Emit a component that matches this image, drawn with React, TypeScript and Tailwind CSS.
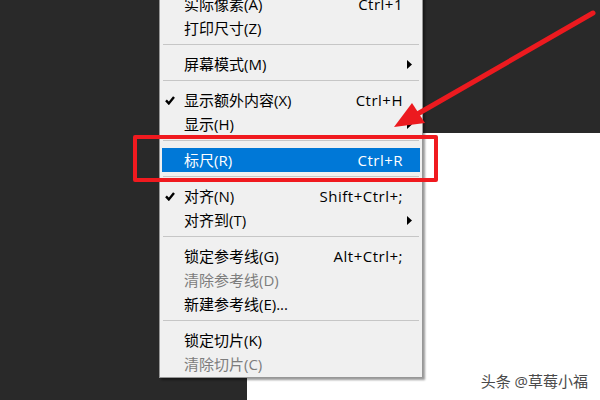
type Entry =
  | { sep: true }
  | {
      sep?: false;
      label: string;
      shortcut?: string;
      check?: boolean;
      sub?: boolean;
      disabled?: boolean;
      active?: boolean;
    };

const entries: Entry[] = [
  { label: "实际像素(A)", shortcut: "Ctrl+1" },
  { label: "打印尺寸(Z)" },
  { sep: true },
  { label: "屏幕模式(M)", sub: true },
  { sep: true },
  { label: "显示额外内容(X)", shortcut: "Ctrl+H", check: true },
  { label: "显示(H)", sub: true },
  { sep: true },
  { label: "标尺(R)", shortcut: "Ctrl+R", active: true },
  { sep: true },
  { label: "对齐(N)", shortcut: "Shift+Ctrl+;", check: true },
  { label: "对齐到(T)", sub: true },
  { sep: true },
  { label: "锁定参考线(G)", shortcut: "Alt+Ctrl+;" },
  { label: "清除参考线(D)", disabled: true },
  { label: "新建参考线(E)..." },
  { sep: true },
  { label: "锁定切片(K)" },
  { label: "清除切片(C)", disabled: true },
];

function Check() {
  return (
    <svg width="10" height="9" viewBox="0 0 10 9">
      <path d="M1 4.4 L3.8 7.4 L9 1" fill="none" stroke="#000" strokeWidth="2.4" />
    </svg>
  );
}

function SubArrow({ white }: { white?: boolean }) {
  return (
    <svg width="5" height="9" viewBox="0 0 5 9">
      <path d="M0 0 L5 4.5 L0 9 Z" fill={white ? "#fff" : "#000"} />
    </svg>
  );
}

export default function App() {
  return (
    <div
      className="relative h-[400px] w-[600px] overflow-hidden bg-[#292929]"
      style={{ fontFamily: '"Open Sans", "Noto Sans CJK SC", sans-serif' }}
    >
      {/* canvas */}
      <div className="absolute left-[247px] top-[133px] h-[267px] w-[353px] bg-white" />

      {/* menu */}
      <div className="absolute left-[159px] top-[-10px] w-[264px] border border-[#979797] bg-[#f0f0f0] py-px shadow-[2px_2px_2px_rgba(0,0,0,0.4)]">
        {entries.map((e, i) =>
          e.sep ? (
            <div key={i} className="h-[12px] px-[3px] pt-[4px]">
              <div className="h-px bg-[#c6c6c6]" />
            </div>
          ) : (
            <div
              key={i}
              className={
                "mx-[2px] flex h-[24px] items-center text-[15px] leading-none " +
                (e.active ? "bg-[#0078d7] text-white" : e.disabled ? "text-[#7d7d7d]" : "text-black")
              }
            >
              <div className="flex w-[22px] pl-[3px]">{e.check && <Check />}</div>
              <div className="flex-1">{e.label}</div>
              {e.shortcut && <div className="tracking-[0.5px]">{e.shortcut}</div>}
              <div className="flex w-[17px] pl-[4px]">{e.sub && <SubArrow white={e.active} />}</div>
            </div>
          )
        )}
      </div>

      {/* red highlight box */}
      <div className="absolute left-[133px] top-[135px] h-[47px] w-[305px] rounded-[2px] border-[4px] border-[#f01a1f]" />

      {/* red arrow */}
      <svg className="pointer-events-none absolute left-0 top-0" width="600" height="400" viewBox="0 0 600 400">
        <line x1="593" y1="13" x2="414" y2="116" stroke="#ec1a1f" strokeWidth="5" strokeLinecap="round" />
        <polygon points="394,127 412,103 425,123" fill="#ec1a1f" />
      </svg>

      {/* watermark */}
      <div className="absolute right-[12px] bottom-[8px] text-[15px] text-[#4a4a4a] [text-shadow:0_0_2px_#fff]">
        头条 @草莓小福
      </div>
    </div>
  );
}
